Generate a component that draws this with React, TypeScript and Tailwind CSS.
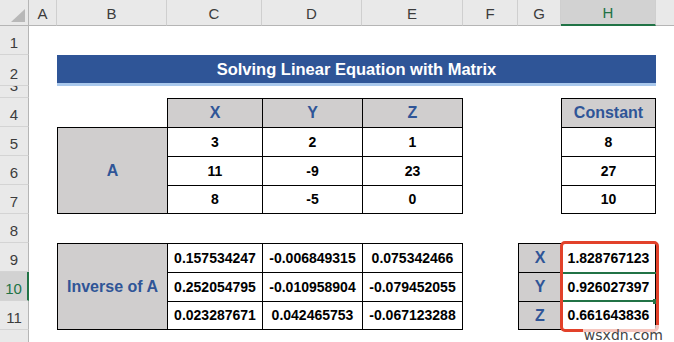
import React from 'react';

const colLetters = [
  { l: 'A', cls: 'col-start-2' },
  { l: 'B', cls: 'col-start-3' },
  { l: 'C', cls: 'col-start-4' },
  { l: 'D', cls: 'col-start-5' },
  { l: 'E', cls: 'col-start-6' },
  { l: 'F', cls: 'col-start-7' },
  { l: 'G', cls: 'col-start-8' },
];

const rowNums = [
  { n: 1, cls: 'row-start-2' },
  { n: 2, cls: 'row-start-3' },
  { n: 3, cls: 'row-start-4' },
  { n: 4, cls: 'row-start-5' },
  { n: 5, cls: 'row-start-6' },
  { n: 6, cls: 'row-start-7' },
  { n: 7, cls: 'row-start-8' },
  { n: 8, cls: 'row-start-9' },
  { n: 9, cls: 'row-start-10' },
  { n: 11, cls: 'row-start-12' },
  { n: 12, cls: 'row-start-13' },
];

const head = 'flex items-center justify-center bg-[#d0cece] border-black text-[16px] font-bold text-[#2f5597]';
const val = 'flex items-center justify-center bg-white border-black text-[14px] font-bold text-black';

export default function App() {
  return (
    <div className="relative w-[674px] h-[342px] overflow-hidden bg-white font-['Liberation_Sans',Arial,sans-serif]">
      <div className="grid grid-cols-[29px_28px_110px_95px_100px_101px_55px_43px_95px_1fr] grid-rows-[26px_29px_31px_12px_repeat(9,29px)]">
        {/* Corner */}
        <div className="relative col-start-1 row-start-1 bg-[#e9e9e9] border-r border-b border-[#b5b5b5]">
          <svg className="absolute right-[3px] bottom-[3px]" width="14" height="13" viewBox="0 0 14 13">
            <polygon points="14,0 14,13 0,13" fill="#b8b8b8" />
          </svg>
        </div>

        {/* Column headers */}
        {colLetters.map((c) => (
          <div
            key={c.l}
            className={`${c.cls} row-start-1 flex items-center justify-center pt-[3px] bg-[#e9e9e9] border-r border-b border-r-[#cfcfcf] border-b-[#b5b5b5] text-[15px] text-[#3c3c3c]`}
          >
            {c.l}
          </div>
        ))}
        <div className="col-start-9 row-start-1 flex items-center justify-center pt-[3px] bg-[#d2d2d2] border-r border-r-[#cfcfcf] border-b-2 border-b-[#217346] text-[15px] text-[#217346]">
          H
        </div>
        <div className="col-start-10 row-start-1 bg-[#e9e9e9] border-b border-[#b5b5b5]" />

        {/* Row headers */}
        {rowNums.map((r) => (
          <div
            key={r.n}
            className={`col-start-1 ${r.cls} flex items-end justify-center overflow-hidden pb-[4px] leading-none bg-[#e9e9e9] border-r border-b border-r-[#b5b5b5] border-b-[#d4d4d4] text-[15px] text-[#3c3c3c]`}
          >
            {r.n}
          </div>
        ))}
        <div className="col-start-1 row-start-11 flex items-end justify-center pb-[4px] leading-none bg-[#d2d2d2] border-r-2 border-b border-r-[#217346] border-b-[#d4d4d4] text-[15px] text-[#217346]">
          10
        </div>

        {/* Title */}
        <div className="col-start-3 col-end-10 row-start-3 flex items-center justify-center bg-[#2f5597] border-b-[3px] border-[#a9c8ec] text-[16.5px] font-bold text-white">
          Solving Linear Equation with Matrix
        </div>

        {/* Matrix A */}
        <div className={`col-start-4 row-start-5 border-l border-t ${head}`}>X</div>
        <div className={`col-start-5 row-start-5 border-l border-t ${head}`}>Y</div>
        <div className={`col-start-6 row-start-5 border-l border-t border-r ${head}`}>Z</div>

        <div className={`col-start-3 row-start-6 row-span-3 border-l border-t border-b ${head}`}>A</div>
        <div className={`col-start-4 row-start-6 border-l border-t ${val}`}>3</div>
        <div className={`col-start-5 row-start-6 border-l border-t ${val}`}>2</div>
        <div className={`col-start-6 row-start-6 border-l border-t border-r ${val}`}>1</div>
        <div className={`col-start-4 row-start-7 border-l border-t ${val}`}>11</div>
        <div className={`col-start-5 row-start-7 border-l border-t ${val}`}>-9</div>
        <div className={`col-start-6 row-start-7 border-l border-t border-r ${val}`}>23</div>
        <div className={`col-start-4 row-start-8 border-l border-t border-b ${val}`}>8</div>
        <div className={`col-start-5 row-start-8 border-l border-t border-b ${val}`}>-5</div>
        <div className={`col-start-6 row-start-8 border-l border-t border-r border-b ${val}`}>0</div>

        {/* Constants */}
        <div className={`col-start-9 row-start-5 border-l border-t border-r ${head}`}>Constant</div>
        <div className={`col-start-9 row-start-6 border-l border-t border-r ${val}`}>8</div>
        <div className={`col-start-9 row-start-7 border-l border-t border-r ${val}`}>27</div>
        <div className={`col-start-9 row-start-8 border-l border-t border-r border-b ${val}`}>10</div>

        {/* Inverse of A */}
        <div className={`col-start-3 row-start-10 row-span-3 border-l border-t border-b ${head}`}>Inverse of A</div>
        <div className={`col-start-4 row-start-10 border-l border-t ${val}`}>0.157534247</div>
        <div className={`col-start-5 row-start-10 border-l border-t ${val}`}>-0.006849315</div>
        <div className={`col-start-6 row-start-10 border-l border-t border-r ${val}`}>0.075342466</div>
        <div className={`col-start-4 row-start-11 border-l border-t ${val}`}>0.252054795</div>
        <div className={`col-start-5 row-start-11 border-l border-t ${val}`}>-0.010958904</div>
        <div className={`col-start-6 row-start-11 border-l border-t border-r ${val}`}>-0.079452055</div>
        <div className={`col-start-4 row-start-12 border-l border-t border-b ${val}`}>0.023287671</div>
        <div className={`col-start-5 row-start-12 border-l border-t border-b ${val}`}>0.042465753</div>
        <div className={`col-start-6 row-start-12 border-l border-t border-r border-b ${val}`}>-0.067123288</div>

        {/* Solution */}
        <div className={`col-start-8 row-start-10 border-l border-t ${head}`}>X</div>
        <div className={`col-start-8 row-start-11 border-l border-t ${head}`}>Y</div>
        <div className={`col-start-8 row-start-12 border-l border-t border-b ${head}`}>Z</div>
        <div className={`col-start-9 row-start-10 border-l border-t border-r ${val}`}>1.828767123</div>
        <div className={`relative col-start-9 row-start-11 border-l border-t border-r ${val}`}>
          <div className="absolute -left-px -right-px -top-px -bottom-px border-y-2 border-[#217346]" />
          <div className="absolute -right-[3px] -bottom-[3px] w-[5px] h-[5px] bg-[#217346]" />
          <span className="relative">0.926027397</span>
        </div>
        <div className={`col-start-9 row-start-12 border-l border-t border-r border-b ${val}`}>0.661643836</div>
        <div className="relative col-start-9 row-start-10 row-span-3 pointer-events-none">
          <div className="absolute -left-px -right-[3px] -top-[2px] -bottom-[2px] rounded-[5px] border-[3px] border-[#e2412a]" />
        </div>
      </div>

      {/* Watermark */}
      <div className="absolute right-[10px] bottom-[-4px] text-[14px] text-[#444] font-['DejaVu_Sans',sans-serif] bg-white/70 px-px">
        wsxdn.com
      </div>
    </div>
  );
}
